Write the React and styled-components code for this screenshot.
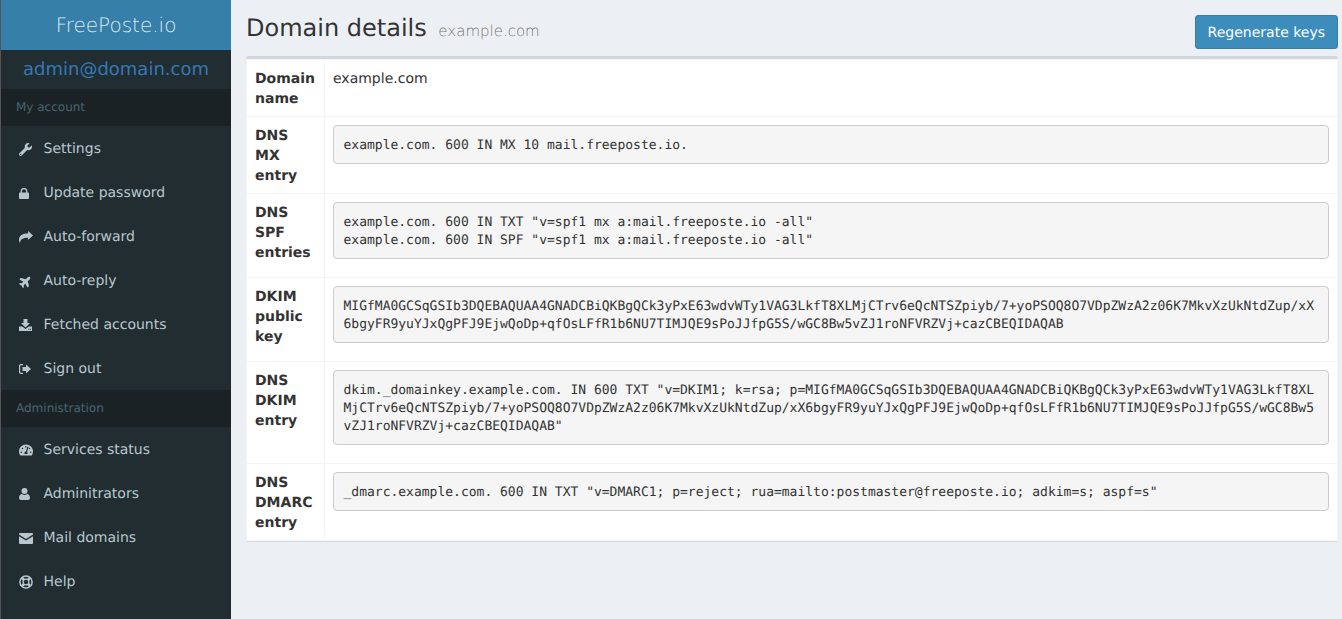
import React from 'react';
import styled, { createGlobalStyle } from 'styled-components';
import { FaWrench, FaPlane, FaTachometerAlt } from 'react-icons/fa';

const LockIcon = () => (
  <Glyph width="10" height="11" viewBox="0 0 20 22">
    <path d="M2 9h16a2 2 0 0 1 2 2v9a2 2 0 0 1-2 2H2a2 2 0 0 1-2-2v-9a2 2 0 0 1 2-2z" />
    <path d="M4.5 10V6.5a5.5 5.5 0 0 1 11 0V10" fill="none" stroke="currentColor" strokeWidth="2.6" />
  </Glyph>
);

const ShareIcon = () => (
  <Glyph width="14" height="12" viewBox="0 0 14 12">
    <path d="M14 4.5L9 0v2.5C4 2.5 0 4 0 9c0 1.2.4 2.2 1 3 .2-3.5 3-5.2 8-5.2V9z" />
  </Glyph>
);

const DownloadIcon = () => (
  <Glyph width="13" height="12" viewBox="0 0 13 12">
    <path d="M4.5 0h4v4H11L6.5 8.5 2 4h2.5z" />
    <path
      fillRule="evenodd"
      d="M0 7.5h3.3L6.5 10l3.2-2.5H13V12H0zM9.4 9.8v1h1v-1zM11 9.8v1h1v-1z"
    />
  </Glyph>
);

const SignOutIcon = () => (
  <Glyph width="12" height="10" viewBox="0 0 12 10">
    <path d="M4 0H2a2 2 0 0 0-2 2v6a2 2 0 0 0 2 2h2V8.8H2a.8.8 0 0 1-.8-.8V2a.8.8 0 0 1 .8-.8h2z" />
    <path d="M7 .5L12 5 7 9.500V7H3.500V3H7z" />
  </Glyph>
);

const UserIcon = () => (
  <Glyph width="11" height="12" viewBox="0 0 11 12">
    <circle cx="5.500" cy="3" r="3" />
    <path d="M0 10c0-2.500 1.500-4 3-4 .8.700 1.600 1 2.500 1s1.700-.3 2.500-1c1.500 0 3 1.500 3 4 0 1.300-1 2-2 2H2c-1 0-2-.7-2-2z" />
  </Glyph>
);

const MailIcon = () => (
  <Glyph width="14" height="11" viewBox="0 0 14 11">
    <path d="M0 1a1 1 0 0 1 1-1h12a1 1 0 0 1 1 1v.6L7 6 0 1.600z" />
    <path d="M0 3.200l7 4.400 7-4.400V10a1 1 0 0 1-1 1H1a1 1 0 0 1-1-1z" />
  </Glyph>
);

const HelpIcon = () => (
  <Glyph width="14" height="14" viewBox="0 0 14 14">
    <circle cx="7" cy="7" r="6.100" fill="none" stroke="currentColor" strokeWidth="1.500" />
    <circle cx="7" cy="7" r="2.900" fill="none" stroke="currentColor" strokeWidth="1.300" />
    <path
      d="M2.900 2.900l2 2M11.100 2.900l-2 2M2.900 11.100l2-2M11.100 11.100l-2-2"
      fill="none"
      stroke="currentColor"
      strokeWidth="2.600"
    />
  </Glyph>
);

const accountLinks = [
  { label: 'Settings', icon: <FaWrench size={13} /> },
  { label: 'Update password', icon: <LockIcon /> },
  { label: 'Auto-forward', icon: <ShareIcon /> },
  { label: 'Auto-reply', icon: <FaPlane size={13} style={{ transform: 'rotate(-45deg)' }} /> },
  { label: 'Fetched accounts', icon: <DownloadIcon /> },
  { label: 'Sign out', icon: <SignOutIcon /> }
];

const adminLinks = [
  { label: 'Services status', icon: <FaTachometerAlt size={14} /> },
  { label: 'Adminitrators', icon: <UserIcon /> },
  { label: 'Mail domains', icon: <MailIcon /> },
  { label: 'Help', icon: <HelpIcon /> }
];

const rows = [
  { name: 'Domain name', value: 'example.com', plain: true },
  { name: 'DNS MX entry', value: 'example.com. 600 IN MX 10 mail.freeposte.io.' },
  {
    name: 'DNS SPF entries',
    value:
      'example.com. 600 IN TXT "v=spf1 mx a:mail.freeposte.io -all"\nexample.com. 600 IN SPF "v=spf1 mx a:mail.freeposte.io -all"'
  },
  {
    name: 'DKIM public key',
    value:
      'MIGfMA0GCSqGSIb3DQEBAQUAA4GNADCBiQKBgQCk3yPxE63wdvWTy1VAG3LkfT8XLMjCTrv6eQcNTSZpiyb/7+yoPSOQ8O7VDpZWzA2z06K7MkvXzUkNtdZup/xX6bgyFR9yuYJxQgPFJ9EjwQoDp+qfOsLFfR1b6NU7TIMJQE9sPoJJfpG5S/wGC8Bw5vZJ1roNFVRZVj+cazCBEQIDAQAB'
  },
  {
    name: 'DNS DKIM entry',
    value:
      'dkim._domainkey.example.com. IN 600 TXT "v=DKIM1; k=rsa; p=MIGfMA0GCSqGSIb3DQEBAQUAA4GNADCBiQKBgQCk3yPxE63wdvWTy1VAG3LkfT8XLMjCTrv6eQcNTSZpiyb/7+yoPSOQ8O7VDpZWzA2z06K7MkvXzUkNtdZup/xX6bgyFR9yuYJxQgPFJ9EjwQoDp+qfOsLFfR1b6NU7TIMJQE9sPoJJfpG5S/wGC8Bw5vZJ1roNFVRZVj+cazCBEQIDAQAB"'
  },
  {
    name: 'DNS DMARC entry',
    value:
      '_dmarc.example.com. 600 IN TXT "v=DMARC1; p=reject; rua=mailto:postmaster@freeposte.io; adkim=s; aspf=s"'
  }
];

const App = () => (
  <Page>
    <GlobalStyle />
    <Sidebar>
      <Logo>FreePoste.io</Logo>
      <UserName>admin@domain.com</UserName>
      <SectionHeader>My account</SectionHeader>
      {accountLinks.map(link => (
        <NavLink key={link.label}>
          <NavIcon>{link.icon}</NavIcon>
          {link.label}
        </NavLink>
      ))}
      <SectionHeader>Administration</SectionHeader>
      {adminLinks.map(link => (
        <NavLink key={link.label}>
          <NavIcon>{link.icon}</NavIcon>
          {link.label}
        </NavLink>
      ))}
    </Sidebar>
    <Main>
      <TitleBar>
        <Title>
          Domain details <small>example.com</small>
        </Title>
        <Button>Regenerate keys</Button>
      </TitleBar>
      <Box>
        <Table>
          <tbody>
            {rows.map(row => (
              <tr key={row.name}>
                <HeadCell>{row.name}</HeadCell>
                <Cell>{row.plain ? <Plain>{row.value}</Plain> : <Code>{row.value}</Code>}</Cell>
              </tr>
            ))}
          </tbody>
        </Table>
      </Box>
    </Main>
  </Page>
);

//------------Styles-------------

const GlobalStyle = createGlobalStyle`
  * {
    box-sizing: border-box;
  }
  html, body {
    margin: 0;
    padding: 0;
    overflow: hidden;
  }
  body {
    font-family: "DejaVu Sans", sans-serif;
    font-size: 14px;
    line-height: 20px;
    color: #333;
    background: #ecf0f5;
    text-rendering: geometricPrecision;
  }
`;

const Page = styled.div`
  display: flex;
  height: 619px;
  overflow: hidden;
`;

const Sidebar = styled.nav`
  flex: 0 0 231px;
  background: #222d32;
  border-left: 1px solid #555;
`;

const Logo = styled.div`
  height: 50px;
  line-height: 50px;
  background: #367fa9;
  color: rgba(255, 255, 255, 0.85);
  text-align: center;
  font-size: 20px;
  font-weight: 300;
`;

const UserName = styled.div`
  height: 39px;
  line-height: 39px;
  text-align: center;
  font-size: 18px;
  color: #337ab7;
`;

const SectionHeader = styled.div`
  height: 37px;
  padding: 10px 15px;
  background: #1a2226;
  color: #4b646f;
  font-size: 12px;
  line-height: 16px;
`;

const NavLink = styled.a`
  display: flex;
  align-items: center;
  height: 44px;
  padding: 2px 0 0 18px;
  color: #b8c7ce;
  font-size: 14px;
`;

const NavIcon = styled.span`
  display: flex;
  align-items: center;
  width: 24.5px;
  height: 20px;
`;

const Glyph = styled.svg`
  display: block;
  fill: currentColor;
`;

const Main = styled.main`
  flex: 1;
  min-width: 0;
  padding: 0 4px 0 15px;
`;

const TitleBar = styled.div`
  display: flex;
  justify-content: space-between;
  align-items: flex-start;
  height: 56px;
`;

const Title = styled.h1`
  margin: 0;
  padding-top: 16px;
  font-size: 24px;
  line-height: 24px;
  font-weight: 500;
  color: #333;
  small {
    margin-left: 4px;
    font-size: 15px;
    font-weight: 300;
    color: #777;
  }
`;

const Button = styled.button`
  margin-top: 15px;
  height: 34px;
  padding: 7px 12px 5px;
  background: #3c8dbc;
  border: 1px solid #367fa9;
  border-radius: 3px;
  color: #fff;
  font-family: inherit;
  font-size: 14px;
  line-height: 20px;
  text-rendering: inherit;
`;

const Box = styled.div`
  background: #fff;
  border-top: 3px solid #d2d6de;
  border-radius: 3px;
  box-shadow: 0 1px 1px rgba(0, 0, 0, 0.1);
`;

const Table = styled.table`
  width: 100%;
  border-collapse: separate;
  border-spacing: 0;
  border: 1px solid #f4f4f4;
  border-bottom: 0;
`;

const HeadCell = styled.th`
  width: 78px;
  padding: 9px 8px 7px;
  text-align: left;
  vertical-align: top;
  font-weight: 700;
  border-right: 1px solid #f4f4f4;
  border-bottom: 1px solid #f4f4f4;
`;

const Cell = styled.td`
  padding: 8px;
  vertical-align: top;
  border-bottom: 1px solid #f4f4f4;
`;

const Plain = styled.div`
  padding-top: 1px;
`;

const Code = styled.pre`
  margin: 0 0 10px;
  padding: 10.5px 9.5px 8.5px;
  background: #f5f5f5;
  border: 1px solid #ccc;
  border-radius: 4px;
  color: #333;
  font-family: "DejaVu Sans Mono", monospace;
  font-size: 13px;
  line-height: 18px;
  white-space: pre-wrap;
  word-break: break-all;
`;

//----------------------End Styles--------------------
export default App;
